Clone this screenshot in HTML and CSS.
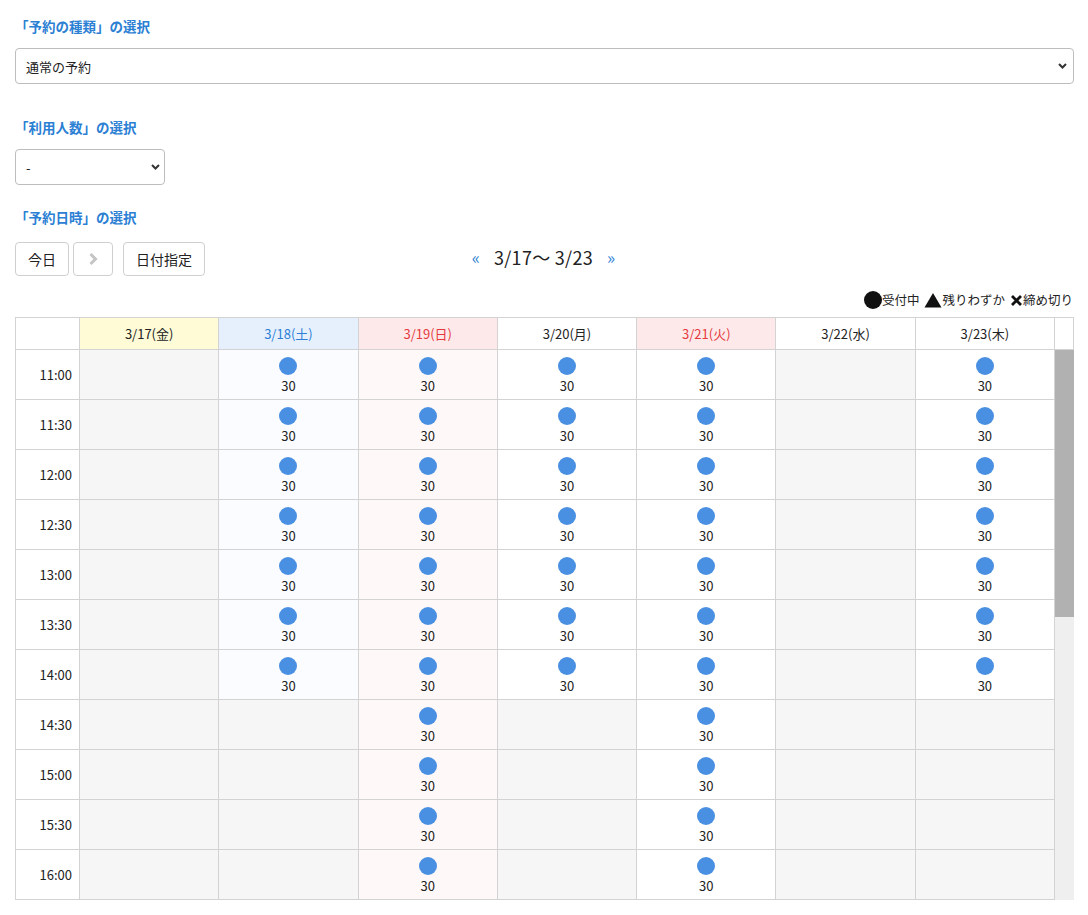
FILE: index.html
```html
<!DOCTYPE html>
<html lang="ja">
<head>
<meta charset="utf-8">
<title>予約</title>
<link rel="stylesheet" href="styles.css">
</head>
<body>
<div class="page">
  <h2 class="heading first">「予約の種類」の選択</h2>
  <div class="select wide">
    <span>通常の予約</span>
    <svg class="chev" width="9" height="6" viewBox="0 0 9 6"><path d="M1 1 L4.5 4.5 L8 1" fill="none" stroke="#333" stroke-width="2"/></svg>
  </div>

  <h2 class="heading second">「利用人数」の選択</h2>
  <div class="select narrow">
    <span>-</span>
    <svg class="chev" width="9" height="6" viewBox="0 0 9 6"><path d="M1 1 L4.5 4.5 L8 1" fill="none" stroke="#333" stroke-width="2"/></svg>
  </div>

  <h2 class="heading third">「予約日時」の選択</h2>

  <div class="toolbar">
    <div class="btns">
      <button class="btn today">今日</button>
      <button class="btn next" disabled>
        <svg width="10" height="14" viewBox="0 0 10 14"><path d="M2.5 2 L7.5 7 L2.5 12" fill="none" stroke="#c4c4c4" stroke-width="3"/></svg>
      </button>
      <button class="btn pick">日付指定</button>
    </div>
    <div class="range">
      <span class="arrow">«</span>
      <span class="range-text">3/17〜 3/23</span>
      <span class="arrow">»</span>
    </div>
    <div></div>
  </div>

  <div class="legend">
    <span class="lg-item"><span class="lg-dot"></span>受付中</span>
    <span class="lg-item"><svg width="18" height="16" viewBox="0 0 18 16"><path d="M9 1 L17.5 15.5 L0.5 15.5 Z" fill="#111"/></svg>残りわずか</span>
    <span class="lg-item"><svg width="13" height="13" viewBox="0 0 13 13"><path d="M2 2 L11 11 M11 2 L2 11" stroke="#111" stroke-width="2.8"/></svg>締め切り</span>
  </div>

  <div class="table">
    <div class="thead">
      <div class="th"></div>
      <div class="th fri">3/17(金)</div>
      <div class="th sat">3/18(土)</div>
      <div class="th sun">3/19(日)</div>
      <div class="th">3/20(月)</div>
      <div class="th hol">3/21(火)</div>
      <div class="th">3/22(水)</div>
      <div class="th">3/23(木)</div>
      <div class="th gutter"></div>
    </div>
    <div class="tbody">
      <div class="rows" id="rows"></div>
      <div class="scrollbar"><div class="thumb"></div></div>
    </div>
  </div>
</div>
<script src="app.js"></script>
</body>
</html>
```

FILE: app.js
```js
(function () {
  var times = ["11:00","11:30","12:00","12:30","13:00","13:30","14:00","14:30","15:00","15:30","16:00"];
  var days = [
    { open: 0, cls: "" },
    { open: 7, cls: "sat" },
    { open: 11, cls: "sun" },
    { open: 7, cls: "" },
    { open: 11, cls: "" },
    { open: 0, cls: "" },
    { open: 7, cls: "" }
  ];
  var rows = document.getElementById("rows");
  var html = "";
  for (var r = 0; r < times.length; r++) {
    html += '<div class="td time">' + times[r] + '</div>';
    for (var d = 0; d < days.length; d++) {
      if (r < days[d].open) {
        html += '<div class="td avail ' + days[d].cls + '"><span class="dot"></span><span class="num">30</span></div>';
      } else {
        html += '<div class="td closed"></div>';
      }
    }
  }
  rows.innerHTML = html;
})();
```

FILE: styles.css
```css
* { box-sizing: border-box; }
html, body { margin: 0; padding: 0; background: #fff; }
body {
  font-family: "Noto Sans CJK JP", "Noto Sans", sans-serif;
  color: #222;
  font-size: 13px;
}
.page {
  padding: 17px 14px 0 15px;
}
.heading {
  margin: 0;
  font-size: 13.5px;
  line-height: 18px;
  font-weight: 700;
  color: #2b80d4;
}
.heading.second { margin-top: 34px; }
.heading.third { margin-top: 23px; }

.select {
  margin-top: 13px;
  height: 36px;
  border: 1px solid #bdbdbd;
  border-radius: 4px;
  background: #fff;
  display: flex;
  align-items: center;
  justify-content: space-between;
  padding: 0 6px 0 10px;
  font-size: 13px;
  color: #222;
}
.select.wide { width: 1059px; }
.select.narrow { width: 150px; padding-right: 4px; }

.toolbar {
  margin-top: 16px;
  display: grid;
  grid-template-columns: 1fr auto 1fr;
  align-items: center;
  width: 1059px;
}
.btns { display: flex; align-items: center; }
.btn {
  height: 34px;
  border: 1px solid #cfcfcf;
  border-radius: 4px;
  background: #fff;
  font-family: inherit;
  font-size: 14px;
  color: #222;
  padding: 0;
  display: flex;
  align-items: center;
  justify-content: center;
}
.btn.today { width: 54px; }
.btn.next { width: 40px; margin-left: 4px; }
.btn.pick { width: 82px; margin-left: 10px; }

.range {
  display: flex;
  align-items: center;
  margin-left: -2px;
  margin-bottom: 4px;
}
.range-text {
  font-size: 18px;
  color: #222;
  margin: 0 14px;
  line-height: 24px;
  letter-spacing: 0.3px;
}
.arrow {
  color: #2b80d4;
  font-size: 17px;
  line-height: 24px;
}

.legend {
  margin-top: 15px;
  width: 1058px;
  display: flex;
  justify-content: flex-end;
  align-items: center;
  gap: 5px;
  font-size: 12.5px;
  line-height: 18px;
}
.lg-item { display: flex; align-items: center; }
.lg-dot {
  width: 18px;
  height: 18px;
  border-radius: 50%;
  background: #111;
  display: inline-block;
}
.lg-item svg { display: block; }

.table {
  margin-top: 8px;
  width: 1059px;
  border-left: 1px solid #d3d3d3;
  border-top: 1px solid #d3d3d3;
}
.thead {
  display: grid;
  grid-template-columns: 64px repeat(7, 1fr) 19px;
}
.th {
  height: 32px;
  border-right: 1px solid #d3d3d3;
  border-bottom: 1px solid #d3d3d3;
  display: flex;
  align-items: center;
  justify-content: center;
  font-size: 13px;
  color: #222;
  background: #fff;
}
.th.fri { background: #fffbd7; }
.th.sat { background: #e6f0fd; color: #2b7fd6; }
.th.sun, .th.hol { background: #fde9ea; color: #e5393d; }

.tbody {
  display: flex;
  height: 550px;
}
.rows {
  flex: 1;
  display: grid;
  grid-template-columns: 64px repeat(7, 1fr);
  grid-auto-rows: 50px;
  align-content: start;
}
.td {
  border-right: 1px solid #d3d3d3;
  border-bottom: 1px solid #d3d3d3;
}
.td.time {
  display: flex;
  align-items: center;
  justify-content: flex-end;
  padding-right: 7px;
  font-size: 13px;
  background: #fff;
}
.td.closed { background: #f6f6f6; }
.td.avail {
  background: #fff;
  display: flex;
  flex-direction: column;
  align-items: center;
  padding-top: 7px;
  gap: 3px;
}
.td.avail.sat { background: #fafcff; }
.td.avail.sun { background: #fff8f8; }
.dot {
  width: 18px;
  height: 18px;
  border-radius: 50%;
  background: #4a90e2;
  display: block;
}
.num {
  font-size: 13px;
  line-height: 16px;
  color: #222;
}
.scrollbar {
  width: 19px;
  background: #efefef;
  display: flex;
  flex-direction: column;
}
.thumb {
  height: 267px;
  background: #b1b1b1;
}
```
